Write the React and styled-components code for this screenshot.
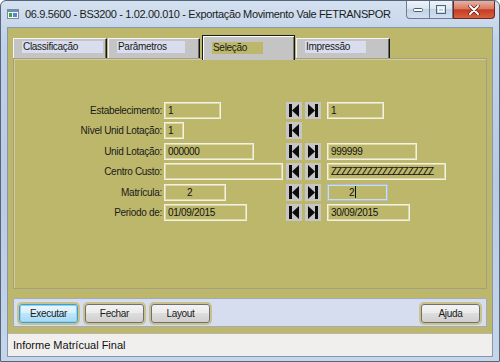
import React from 'react';
import styled, { createGlobalStyle } from 'styled-components';

const GlobalStyle = createGlobalStyle`
  html, body {
    margin: 0;
    padding: 0;
    background: #ffffff;
  }
  body {
    font-family: "Liberation Sans", Arial, sans-serif;
  }
`;

const Window = styled.div`
  width: 500px;
  height: 362px;
  box-sizing: border-box;
  display: flex;
  flex-direction: column;
  border: 1px solid #56657a;
  border-radius: 6px 6px 0 0;
  overflow: hidden;
  background: linear-gradient(180deg, #d3e0ef 0%, #c0d2e8 12%, #b8cbe3 50%, #c6d6ea 100%);
`;

const TitleBar = styled.div`
  height: 27px;
  display: flex;
  align-items: flex-start;
  flex: none;
`;

const AppIcon = styled.svg`
  margin: 8px 0 0 6px;
  flex: none;
`;

const Title = styled.div`
  margin: 5px 0 0 6px;
  font-size: 11px;
  letter-spacing: -0.35px;
  line-height: 16px;
  color: #1b1b1b;
  white-space: nowrap;
`;

const Controls = styled.div`
  display: flex;
  margin-left: auto;
  margin-right: 4px;
  height: 18px;
`;

const CaptionButton = styled.div`
  box-sizing: border-box;
  width: ${p => p.$w}px;
  height: 18px;
  display: flex;
  align-items: center;
  justify-content: center;
  border: 1px solid #6d7c92;
  border-top: none;
  border-left: ${p => (p.$first ? '1px solid #6d7c92' : 'none')};
  border-radius: ${p => (p.$first ? '0 0 0 4px' : '0')};
  background: linear-gradient(180deg, #eef3fa 0%, #dbe5f1 45%, #c3d3e7 50%, #d0def0 100%);
`;

const CloseButton = styled.div`
  box-sizing: border-box;
  width: 42px;
  height: 18px;
  display: flex;
  align-items: center;
  justify-content: center;
  border: 1px solid #6b2b22;
  border-top: none;
  border-radius: 0 0 4px 0;
  background: linear-gradient(180deg, #eab0a2 0%, #d97a65 45%, #c63c22 52%, #d7603f 100%);
`;

const Client = styled.div`
  flex: 1;
  display: flex;
  flex-direction: column;
  margin: 0 7px 5px 7px;
  box-shadow: 0 0 0 1px #8697ad;
`;

const Main = styled.div`
  flex: 1;
  display: flex;
  flex-direction: column;
  background: #bdb76b;
  padding: 7px 5px 6px 5px;
  font-size: 10px;
  letter-spacing: -0.3px;
  color: #1a1a1a;
`;

const TabStrip = styled.div`
  display: flex;
  align-items: flex-end;
  height: 25px;
  margin-bottom: -2px;
  position: relative;
  z-index: 1;
`;

const Tab = styled.div`
  box-sizing: border-box;
  width: ${p => p.$w}px;
  margin-right: ${p => p.$gap}px;
  height: ${p => (p.$active ? 25 : 20)}px;
  margin-bottom: ${p => (p.$active ? 0 : 2)}px;
  background: #c4c4c4;
  border-top: 1px solid ${p => (p.$active ? '#1a1a1a' : '#f4f4f4')};
  border-left: 1px solid ${p => (p.$active ? '#1a1a1a' : '#f4f4f4')};
  border-right: 1px solid #151515;
  box-shadow: ${p => (p.$active
    ? 'inset 1px 1px 0 #ffffff, inset -1px 0 0 #7c7c7c'
    : 'inset -1px 0 0 #6a6a6a')};
`;

const TabLabel = styled.div`
  width: ${p => p.$w}px;
  height: 12px;
  margin: ${p => (p.$active ? 6 : 2)}px 0 0 ${p => (p.$active ? 9 : 8)}px;
  padding-left: 1px;
  line-height: 12px;
  background: ${p => (p.$active ? '#bdb76b' : '#d9ddee')};
  white-space: nowrap;
`;

const Panel = styled.div`
  flex: none;
  height: 231px;
  box-sizing: border-box;
  border: 1px solid #a29f86;
  box-shadow: inset 1px 1px 0 #d2cd98;
  padding-top: 43px;
`;

const FormGrid = styled.div`
  display: grid;
  grid-template-columns: 150px 122px 41px 1fr;
  grid-auto-rows: 17px;
  row-gap: 3.4px;
`;

const Label = styled.div`
  text-align: right;
  padding-right: 2px;
  line-height: 17px;
  white-space: nowrap;
`;

const Field = styled.div`
  box-sizing: border-box;
  width: ${p => p.$w}px;
  height: 17px;
  border: 1px solid ${p => (p.$focus ? '#a6c1df' : '#f3f1e2')};
  box-shadow: inset 0 0 0 1px ${p => (p.$focus ? '#cfdcea' : '#dcd8ae')};
  padding-left: ${p => p.$indent || 3}px;
  letter-spacing: ${p => (p.$tight ? '-1px' : 'inherit')};
  line-height: 15px;
  color: #121212;
  white-space: nowrap;
  overflow: hidden;
  display: flex;
  align-items: center;
`;

const Caret = styled.span`
  display: inline-block;
  width: 1px;
  height: 12px;
  background: #111;
  margin-left: 1px;
`;

const ArrowCell = styled.div`
  display: flex;
  gap: 3px;
`;

const ArrowButton = styled.div`
  width: 16px;
  height: 17px;
  background: #c6c6c6;
  display: flex;
`;

const ButtonBar = styled.div`
  flex: none;
  margin-top: 9px;
  height: 29px;
  box-sizing: border-box;
  border: 1px solid #a3aabb;
  background: #d5ddef;
  display: flex;
  align-items: flex-start;
  gap: 7px;
  padding: 5px 6px 0 5px;
`;

const Button = styled.div`
  box-sizing: border-box;
  width: 59px;
  height: 19px;
  margin-left: ${p => (p.$right ? 'auto' : '0')};
  display: flex;
  align-items: center;
  justify-content: center;
  border: 1px solid ${p => (p.$default ? '#3d9fd3' : '#707070')};
  border-radius: 3px;
  background: ${p => (p.$default
    ? 'linear-gradient(180deg, #eaf6fd 0%, #d9f0fc 45%, #bee6fd 50%, #a7d9f5 100%)'
    : 'linear-gradient(180deg, #f3f3f3 0%, #ebebeb 45%, #dddddd 50%, #cfcfcf 100%)')};
  box-shadow: 0 0 0 2px #c9c38b${p => (p.$default ? ', inset 0 0 0 1px #8fd3f4' : '')};
  color: #1a1a1a;
`;

const StatusBar = styled.div`
  flex: none;
  height: 23px;
  box-sizing: border-box;
  border-top: 1px solid #b8b6a8;
  background: #f1eeee;
  padding-left: 5px;
  font-size: 11px;
  line-height: 22px;
  color: #111;
`;

const FirstIcon = () => (
  <svg width="16" height="17" viewBox="0 0 16 17">
    <rect x="3" y="2" width="3" height="13" fill="#0c0c0c" />
    <polygon points="13,2 6,8.5 13,15" fill="#0c0c0c" />
  </svg>
);

const LastIcon = () => (
  <svg width="16" height="17" viewBox="0 0 16 17">
    <polygon points="3,2 10,8.5 3,15" fill="#0c0c0c" />
    <rect x="10" y="2" width="3" height="13" fill="#0c0c0c" />
  </svg>
);

const tabs = [
  { label: 'Classificação', w: 94, lw: 80, gap: 1 },
  { label: 'Parâmetros', w: 92, lw: 67, gap: 2 },
  { label: 'Seleção', w: 93, lw: 50, gap: 1, active: true },
  { label: 'Impressão', w: 94, lw: 60, gap: 0 },
];

const rows = [
  { label: 'Estabelecimento:', from: '1', fw: 57, to: '1', tw: 57 },
  { label: 'Nível Unid Lotação:', from: '1', fw: 20, single: true },
  { label: 'Unid Lotação:', from: '000000', fw: 90, to: '999999', tw: 90 },
  { label: 'Centro Custo:', from: '', fw: 119, to: 'ZZZZZZZZZZZZZZZZZZZZ', tw: 119, tight: true },
  { label: 'Matrícula:', from: '2', fw: 62, fi: 22, to: '2', tw: 61, ti: 21, focus: true },
  { label: 'Periodo de:', from: '01/09/2015', fw: 83, to: '30/09/2015', tw: 83 },
];

export default function App() {
  return (
    <>
      <GlobalStyle />
      <Window>
        <TitleBar>
          <AppIcon width="12" height="10" viewBox="0 0 12 10">
            <rect x="0.5" y="0.5" width="11" height="9" fill="#f4f6f8" stroke="#7d8a99" />
            <rect x="1" y="1" width="10" height="2" fill="#6d8fb8" />
            <rect x="2" y="4" width="3" height="4" fill="#3aa34a" />
            <rect x="6" y="4" width="4" height="4" fill="#5a86c4" />
          </AppIcon>
          <Title>06.9.5600 - BS3200 - 1.02.00.010 - Exportação Movimento Vale FETRANSPOR</Title>
          <Controls>
            <CaptionButton $w={24} $first>
              <svg width="10" height="6" viewBox="0 0 10 6">
                <rect x="0.5" y="1.5" width="9" height="3" rx="1" fill="#ffffff" stroke="#4d5d73" />
              </svg>
            </CaptionButton>
            <CaptionButton $w={23}>
              <svg width="10" height="9" viewBox="0 0 10 9">
                <rect x="0.5" y="0.5" width="9" height="8" fill="none" stroke="#53637a" />
                <rect x="2.5" y="3" width="5" height="3.5" fill="none" stroke="#ffffff" />
              </svg>
            </CaptionButton>
            <CloseButton>
              <svg width="12" height="10" viewBox="0 0 12 10">
                <path d="M2 1 L10 9 M10 1 L2 9" stroke="#5a1c14" strokeWidth="3.4" strokeLinecap="round" />
                <path d="M2 1 L10 9 M10 1 L2 9" stroke="#ffffff" strokeWidth="2" strokeLinecap="round" />
              </svg>
            </CloseButton>
          </Controls>
        </TitleBar>

        <Client>
          <Main>
            <TabStrip>
              {tabs.map(t => (
                <Tab key={t.label} $w={t.w} $gap={t.gap} $active={t.active}>
                  <TabLabel $w={t.lw} $active={t.active}>{t.label}</TabLabel>
                </Tab>
              ))}
            </TabStrip>

            <Panel>
              <FormGrid>
                {rows.map(r => (
                  <React.Fragment key={r.label}>
                    <Label>{r.label}</Label>
                    <div>
                      <Field $w={r.fw} $indent={r.fi}>{r.from}</Field>
                    </div>
                    <ArrowCell>
                      <ArrowButton><FirstIcon /></ArrowButton>
                      {!r.single && <ArrowButton><LastIcon /></ArrowButton>}
                    </ArrowCell>
                    <div>
                      {!r.single && (
                        <Field $w={r.tw} $indent={r.ti} $focus={r.focus} $tight={r.tight}>
                          {r.to}
                          {r.focus && <Caret />}
                        </Field>
                      )}
                    </div>
                  </React.Fragment>
                ))}
              </FormGrid>
            </Panel>

            <ButtonBar>
              <Button $default>Executar</Button>
              <Button>Fechar</Button>
              <Button>Layout</Button>
              <Button $right>Ajuda</Button>
            </ButtonBar>
          </Main>
          <StatusBar>Informe Matrícual Final</StatusBar>
        </Client>
      </Window>
    </>
  );
}
